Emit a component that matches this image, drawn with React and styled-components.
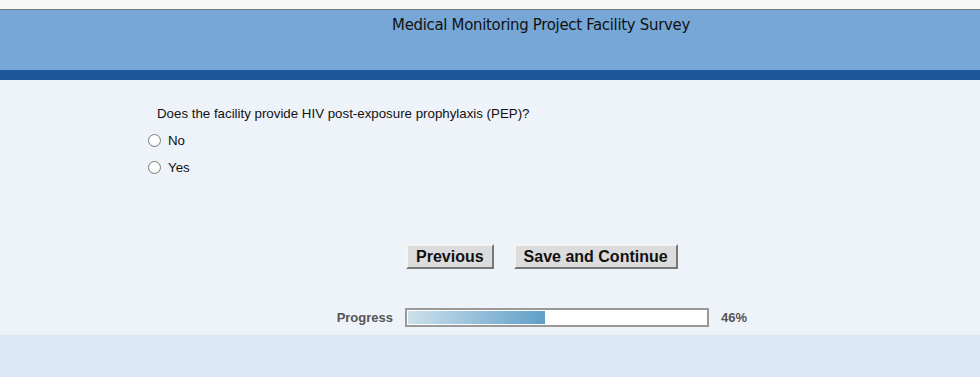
import React, { useState } from 'react';
import styled, { createGlobalStyle } from 'styled-components';

const GlobalStyle = createGlobalStyle`
  html, body {
    margin: 0;
    padding: 0;
    background: #dbe7f4;
    font-family: "Liberation Sans", Arial, sans-serif;
  }
`;

const Page = styled.div`
  width: 980px;
  height: 377px;
  display: flex;
  flex-direction: column;
  overflow: hidden;
`;

const TopStrip = styled.div`
  height: 9px;
  background: #f6f6f6;
  border-bottom: 1px solid #767676;
`;

const Header = styled.div`
  height: 60px;
  background: #76a7d6;
  display: flex;
  justify-content: center;
  padding-left: 102px;
  box-sizing: border-box;
`;

const Title = styled.h1`
  margin: 0;
  padding-top: 5px;
  font-family: "DejaVu Sans Condensed", "DejaVu Sans", sans-serif;
  font-weight: normal;
  font-size: 16.6px;
  line-height: 20px;
  color: #111;
  letter-spacing: -0.3px;
`;

const Band = styled.div`
  height: 10px;
  background: #1e5799;
`;

const Content = styled.main`
  height: 255px;
  background: #eef3fa;
  display: flex;
  flex-direction: column;
  font-size: 13.3px;
  color: #111;
`;

const Question = styled.p`
  margin: 26px 0 0 157px;
  line-height: 16px;
`;

const Options = styled.div`
  margin: 10px 0 0 148px;
  display: flex;
  flex-direction: column;
  gap: 11px;
`;

const Option = styled.label`
  display: flex;
  align-items: center;
  gap: 7px;
  height: 16px;
  cursor: pointer;
`;

const Radio = styled.input`
  appearance: none;
  margin: 0;
  width: 13px;
  height: 13px;
  border-radius: 50%;
  border: 1px solid #7d7d7d;
  background: radial-gradient(circle at 50% 40%, #ffffff 40%, #e6e6e6 100%);
  box-sizing: border-box;
  position: relative;

  &:checked::after {
    content: '';
    position: absolute;
    inset: 3px;
    border-radius: 50%;
    background: #222;
  }
`;

const Buttons = styled.div`
  margin: 69px 0 0 406px;
  display: flex;
  gap: 20px;
`;

const Button = styled.button`
  height: 25px;
  padding: 0 8px;
  background: #dcdcdc;
  border: 2px solid;
  border-color: #f4f4f4 #777 #777 #f4f4f4;
  font-family: "Liberation Sans", Arial, sans-serif;
  font-weight: bold;
  font-size: 16px;
  color: #111;
  cursor: pointer;
`;

const ProgressRow = styled.div`
  margin-top: 39px;
  display: grid;
  grid-template-columns: 393px 304px auto;
  column-gap: 12px;
  align-items: center;
  font-weight: bold;
  font-size: 13px;
  color: #555;
`;

const ProgressLabel = styled.span`
  text-align: right;
`;

const Track = styled.div`
  height: 19px;
  border: 2px solid #999;
  background: #fff;
  padding: 1px;
  box-sizing: border-box;
`;

const Fill = styled.div`
  height: 100%;
  background: linear-gradient(to right, #cde0ec, #5f9fc8);
`;

const Footer = styled.div`
  flex: 1;
  background: #dbe7f4;
`;

export default function App() {
  const [answer, setAnswer] = useState('');
  const progress = 46;

  return (
    <Page>
      <GlobalStyle />
      <TopStrip />
      <Header>
        <Title>Medical Monitoring Project Facility Survey</Title>
      </Header>
      <Band />
      <Content>
        <Question>Does the facility provide HIV post-exposure prophylaxis (PEP)?</Question>
        <Options>
          {['No', 'Yes'].map((opt) => (
            <Option key={opt}>
              <Radio
                type="radio"
                name="pep"
                checked={answer === opt}
                onChange={() => setAnswer(opt)}
              />
              {opt}
            </Option>
          ))}
        </Options>
        <Buttons>
          <Button>Previous</Button>
          <Button>Save and Continue</Button>
        </Buttons>
        <ProgressRow>
          <ProgressLabel>Progress</ProgressLabel>
          <Track>
            <Fill style={{ width: `${progress}%` }} />
          </Track>
          <span>{progress}%</span>
        </ProgressRow>
      </Content>
      <Footer />
    </Page>
  );
}
